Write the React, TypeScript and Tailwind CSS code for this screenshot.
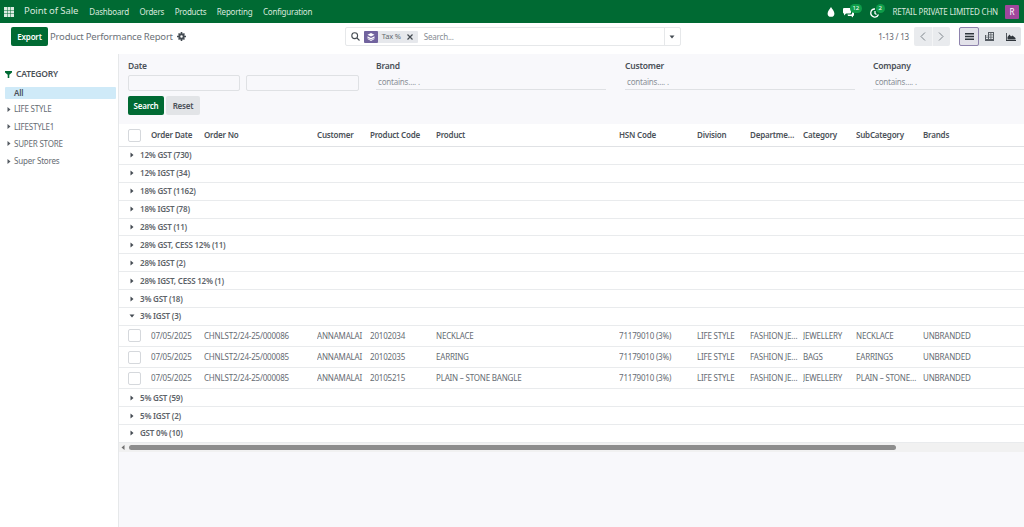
import React from "react";

const FONT = "[font-family:'Noto_Sans','Open_Sans',sans-serif]";
const cols = "grid grid-cols-[23px_53px_113px_53px_66px_183px_78px_53px_53px_53px_67px_101px]";

function Caret({ open = false }: { open?: boolean }) {
  return (
    <svg width="6" height="6" viewBox="0 0 6 6" className="shrink-0 text-[#444b52]">
      {open ? <path d="M0.500 1.500h5L3 4.500z" fill="currentColor" /> : <path d="M1.500 0.500v5L4.500 3z" fill="currentColor" />}
    </svg>
  );
}

function Check() {
  return <span className="block w-[13px] h-[13px] rounded-[2px] border border-[#d5d8dc] bg-white" />;
}

function Group({ label, open = false }: { label: string; open?: boolean }) {
  return (
    <div className="h-[17.900px] flex items-center gap-[5px] pl-[10px] border-b border-[#e9ebed] font-semibold text-[#5d6369] bg-white">
      <Caret open={open} />
      <span>{label}</span>
    </div>
  );
}

const rows = [
  ["07/05/2025", "CHNLST2/24-25/000086", "ANNAMALAI", "20102034", "NECKLACE", "71179010 (3%)", "LIFE STYLE", "FASHION JEWELLERY", "JEWELLERY", "NECKLACE", "UNBRANDED"],
  ["07/05/2025", "CHNLST2/24-25/000085", "ANNAMALAI", "20102035", "EARRING", "71179010 (3%)", "LIFE STYLE", "FASHION JEWELLERY", "BAGS", "EARRINGS", "UNBRANDED"],
  ["07/05/2025", "CHNLST2/24-25/000085", "ANNAMALAI", "20105215", "PLAIN – STONE BANGLE", "71179010 (3%)", "LIFE STYLE", "FASHION JEWELLERY", "JEWELLERY", "PLAIN – STONE BANGLE", "UNBRANDED"],
];

const heads = ["Order Date", "Order No", "Customer", "Product Code", "Product", "HSN Code", "Division", "Department", "Category", "SubCategory", "Brands"];

function Filter({ label, w, ml }: { label: string; w: string; ml: string }) {
  return (
    <div className={`${w} ${ml} shrink-0`}>
      <div className="font-semibold text-[#4b5158] text-[8.500px] leading-[13px]">{label}</div>
      <div className="h-[18px] border-b border-[#dfe1e4] pl-[2px] leading-[20px] text-[#8a9097]">contains.... .</div>
    </div>
  );
}

export default function App() {
  return (
    <div className={`${FONT} antialiased w-[1024px] h-[527px] overflow-hidden flex flex-col bg-white text-[8px] tracking-[-0.2px] text-[#666c73]`}>
      <header className="h-[23px] shrink-0 bg-[#006a33] flex items-center text-[#d9e8df]">
        <svg width="10" height="10" viewBox="0 0 10 10" className="ml-[4px] text-[#dcebe2]" fill="currentColor">
          {[0, 3.5, 7].map((x) => [0, 3.5, 7].map((y) => <rect key={`${x}-${y}`} x={x} y={y} width="3" height="3" />))}
        </svg>
        <span className="ml-[10px] text-[9.500px] tracking-[-0.1px]">Point of Sale</span>
        <nav className="flex ml-[11px] gap-[10.500px]">
          <span>Dashboard</span>
          <span>Orders</span>
          <span>Products</span>
          <span>Reporting</span>
          <span>Configuration</span>
        </nav>
        <div className="ml-auto flex items-center">
          <svg width="8" height="10" viewBox="0 0 8 10" fill="#fff"><path d="M4 0C3 2.200.6 4 .6 6.400a3.400 3.400 0 0 0 6.800 0C7.400 4 5 2.200 4 0z" /></svg>
          <div className="relative ml-[8px] w-[22px] h-[12px]">
            <svg width="11" height="10" viewBox="0 0 11 10" fill="#fff" className="absolute left-0 top-[2px]"><path d="M1 0h6a1 1 0 0 1 1 1v3.500a1 1 0 0 1-1 1H3L1 7.500v-2a1 1 0 0 1-1-1V1a1 1 0 0 1 1-1z" /><path d="M9 2.500h1a1 1 0 0 1 1 1V7a1 1 0 0 1-1 1v1.500L8.200 8H5L4.500 6.500H8a1 1 0 0 0 1-1z" /></svg>
            <span className="absolute left-[7px] top-[-2px] px-[3px] rounded-full bg-[#0f9d4a] text-white text-[6px] leading-[9px]">12</span>
          </div>
          <div className="relative ml-[5px] w-[20px] h-[12px]">
            <svg width="10" height="10" viewBox="0 0 10 10" fill="none" stroke="#fff" strokeWidth="1.300" className="absolute left-0 top-[2px]"><path d="M8.500 6.500A4 4 0 1 1 5 1M5 3v2.500l1.500 1" /></svg>
            <span className="absolute left-[6px] top-[-2px] px-[3px] rounded-full bg-[#0f9d4a] text-white text-[6px] leading-[9px]">2</span>
          </div>
          <span className="ml-[3px]">RETAIL PRIVATE LIMITED CHN</span>
          <span className="ml-[7px] mr-[5px] w-[14px] h-[14px] rounded-[1px] bg-[#a0479c] text-white flex items-center justify-center">R</span>
        </div>
      </header>

      <div className="h-[31px] shrink-0 flex items-start pt-[4px] bg-white">
        <button className="ml-[11px] w-[37px] h-[19px] rounded-[2px] bg-[#006a33] text-white font-semibold">Export</button>
        <span className="ml-[2px] h-[19px] leading-[19px] text-[9.500px] text-[#6b7178]">Product Performance Report</span>
        <svg width="9" height="9" viewBox="0 0 9 9" className="ml-[4px] mt-[5px]" fill="#444b52"><circle cx="4.500" cy="4.500" r="2.200" fill="none" stroke="#444b52" strokeWidth="1.900" /><path d="M3.700 0h1.600v2H3.700zM3.700 7h1.600v2H3.700zM0 3.700h2v1.600H0zM7 3.700h2v1.600H7zM1 2.100l1.100-1.100 1.200 1.200-1.100 1.100zM5.700 6.800l1.100-1.100L8 6.900 6.900 8zM6.900 1L8 2.100 6.800 3.300 5.700 2.200zM2.200 5.700l1.100 1.100L2.100 8 1 6.900z" /></svg>
        <div className="ml-[159px] w-[336px] h-[19px] flex items-center border border-[#e6e8ea] rounded-[2px] bg-white">
          <svg width="9" height="9" viewBox="0 0 9 9" fill="none" stroke="#444b52" strokeWidth="1.100" className="ml-[5px]"><circle cx="3.700" cy="3.700" r="2.900" /><path d="M6 6l2.500 2.500" /></svg>
          <div className="ml-[4px] h-[12px] flex items-center bg-[#e6e8ec] rounded-[1px]">
            <span className="w-[14px] h-[12px] bg-[#71639e] rounded-[1px] flex items-center justify-center">
              <svg width="8" height="8" viewBox="0 0 8 8" fill="#fff"><path d="M4 0l3.500 1.700L4 3.400.5 1.700zM.5 3.200L4 4.900l3.500-1.700v1.500L4 6.400.5 4.700zM.5 5.300L4 7l3.500-1.700V6L4 8 .5 6z" /></svg>
            </span>
            <span className="ml-[4px] text-[7.500px] text-[#62686f]">Tax %</span>
            <svg width="6" height="6" viewBox="0 0 6 6" stroke="#444b52" strokeWidth="1.200" className="ml-[6px] mr-[5px]"><path d="M.5.5l5 5M5.500.5l-5 5" /></svg>
          </div>
          <span className="ml-[6px] text-[#868c93]">Search...</span>
          <span className="ml-auto h-full w-[16px] border-l border-[#e6e8ea] flex items-center justify-center">
            <svg width="6" height="4" viewBox="0 0 6 4" fill="#444b52"><path d="M.5.500h5L3 3.500z" /></svg>
          </span>
        </div>
        <span className="ml-auto h-[19px] leading-[19px] text-[#62686f]">1-13 / 13</span>
        <div className="ml-[5px] h-[19px] w-[36px] flex bg-[#e9ebee] rounded-[2px]">
          <span className="flex-1 flex items-center justify-center">
            <svg width="6" height="9" viewBox="0 0 6 9" fill="none" stroke="#7d838a"><path d="M5 .5l-4 4 4 4" /></svg>
          </span>
          <span className="flex-1 flex items-center justify-center border-l border-[#f4f5f6]">
            <svg width="6" height="9" viewBox="0 0 6 9" fill="none" stroke="#7d838a"><path d="M1 .5l4 4-4 4" /></svg>
          </span>
        </div>
        <div className="ml-[9px] mr-[3px] h-[19px] flex rounded-[2px] bg-[#e1e4e8]">
          <span className="w-[20px] flex items-center justify-center border border-[#8e83ad] bg-[#e3e2ea] rounded-[2px]">
            <svg width="9" height="7" viewBox="0 0 9 7" fill="#2f353b"><path d="M0 0h9v1.600H0zM0 2.700h9v1.600H0zM0 5.400h9V7H0z" /></svg>
          </span>
          <span className="w-[21px] flex items-center justify-center">
            <svg width="9" height="9" viewBox="0 0 9 9" fill="#555b62"><path d="M3 0h6v9H0V3h3zm1 1v1.500h1.500V1zm2.300 0v1.500H8V1zM4 3.300v1.500h1.500V3.300zm2.300 0v1.500H8V3.300zm-5.300 0v1.500h2V3.300zM1 5.600v1.500h2V5.600zm3 0v1.500h1.500V5.600zm2.300 0v1.500H8V5.600z" fillRule="evenodd" /></svg>
          </span>
          <span className="w-[21px] flex items-center justify-center">
            <svg width="10" height="8" viewBox="0 0 10 8" fill="#2f353b"><path d="M0 0h.8v7H10v1H0zM1.500 6.500V4L3.500 1.500 5 3.500 6.500 2.500 9.500 5v1.500z" /></svg>
          </span>
        </div>
      </div>

      <div className="flex-1 min-h-0 flex bg-[#f8f8fb]">
        <aside className="w-[119px] shrink-0 bg-white border-r border-[#e6e8ea] pl-[5px] pr-[2px] pt-[14px]">
          <div className="flex items-center h-[13px]">
            <svg width="7" height="7" viewBox="0 0 7 7" fill="#006a33"><path d="M0 0h7v1.500L4.300 3.800V7H2.700V3.800L0 1.500z" /></svg>
            <span className="ml-[4px] font-semibold text-[8.500px] text-[#4b5158]">CATEGORY</span>
          </div>
          <div className="mt-[6px] h-[12px] bg-[#cfeaf8] rounded-[1px] pl-[9px] font-semibold leading-[12px] text-[#4b5158]">All</div>
          <div className="mt-[4px] flex flex-col gap-[4.800px]">
            {["LIFE STYLE", "LIFESTYLE1", "SUPER STORE", "Super Stores"].map((t) => (
              <div key={t} className="h-[12.500px] flex items-center gap-[3px] pl-[2px]">
                <svg width="4" height="5" viewBox="0 0 4 5" fill="#555b62"><path d="M.5 0v5L3.500 2.500z" /></svg>
                <span>{t}</span>
              </div>
            ))}
          </div>
        </aside>

        <main className="flex-1 min-w-0 overflow-hidden flex flex-col items-start">
          <section className="h-[70px] shrink-0 pl-[9px] pt-[5px] flex">
            <div className="w-[231px] shrink-0">
              <div className="font-semibold text-[#4b5158] text-[8.500px] leading-[13px]">Date</div>
              <div className="mt-[3px] flex gap-[6px]">
                <span className="w-[112px] h-[16px] border border-[#dfe1e4] rounded-[2px] bg-[#f8f8fb]" />
                <span className="w-[113px] h-[16px] border border-[#dfe1e4] rounded-[2px] bg-[#f8f8fb]" />
              </div>
              <div className="mt-[5px] flex gap-[2px]">
                <button className="w-[36px] h-[19px] rounded-[2px] bg-[#006a33] text-white font-semibold">Search</button>
                <button className="w-[34px] h-[19px] rounded-[2px] bg-[#e2e4e7] text-[#4b5158] font-semibold">Reset</button>
              </div>
            </div>
            <Filter label="Brand" w="w-[230px]" ml="ml-[17px]" />
            <Filter label="Customer" w="w-[230px]" ml="ml-[19px]" />
            <Filter label="Company" w="w-[230px]" ml="ml-[18px]" />
          </section>

          <div className="w-full h-[328px] shrink-0 bg-white">
            <div className={`${cols} w-[906px] h-[23px] items-center pl-[9px] bg-white border-b border-[#e0e2e5] font-semibold text-[#4b5158]`}>
              <Check />
              {heads.map((h) => (
                <span key={h} className="truncate pr-[8px]">{h}</span>
              ))}
            </div>
            {["12% GST (730)", "12% IGST (34)", "18% GST (1162)", "18% IGST (78)", "28% GST (11)", "28% GST, CESS 12% (11)", "28% IGST (2)", "28% IGST, CESS 12% (1)", "3% GST (18)"].map((g) => (
              <Group key={g} label={g} />
            ))}
            <Group label="3% IGST (3)" open />
            {rows.map((r, i) => (
              <div key={i} className={`${cols} w-[906px] h-[21.100px] items-center pl-[9px] border-b border-[#e9ebed]`}>
                <Check />
                {r.map((c, j) => (
                  <span key={j} className="truncate pr-[5px]">{c}</span>
                ))}
              </div>
            ))}
            {["5% GST (59)", "5% IGST (2)", "GST 0% (10)"].map((g) => (
              <Group key={g} label={g} />
            ))}
            <div className="h-[9px] bg-[#f1f1f1] flex items-center pl-[2px]">
              <svg width="4" height="5" viewBox="0 0 4 5" fill="#6f6f6f"><path d="M3.500 0v5L.5 2.500z" /></svg>
              <span className="ml-[4px] block w-[767px] h-[5px] rounded-full bg-[#8d8d8d]" />
            </div>
          </div>
        </main>
      </div>
    </div>
  );
}
